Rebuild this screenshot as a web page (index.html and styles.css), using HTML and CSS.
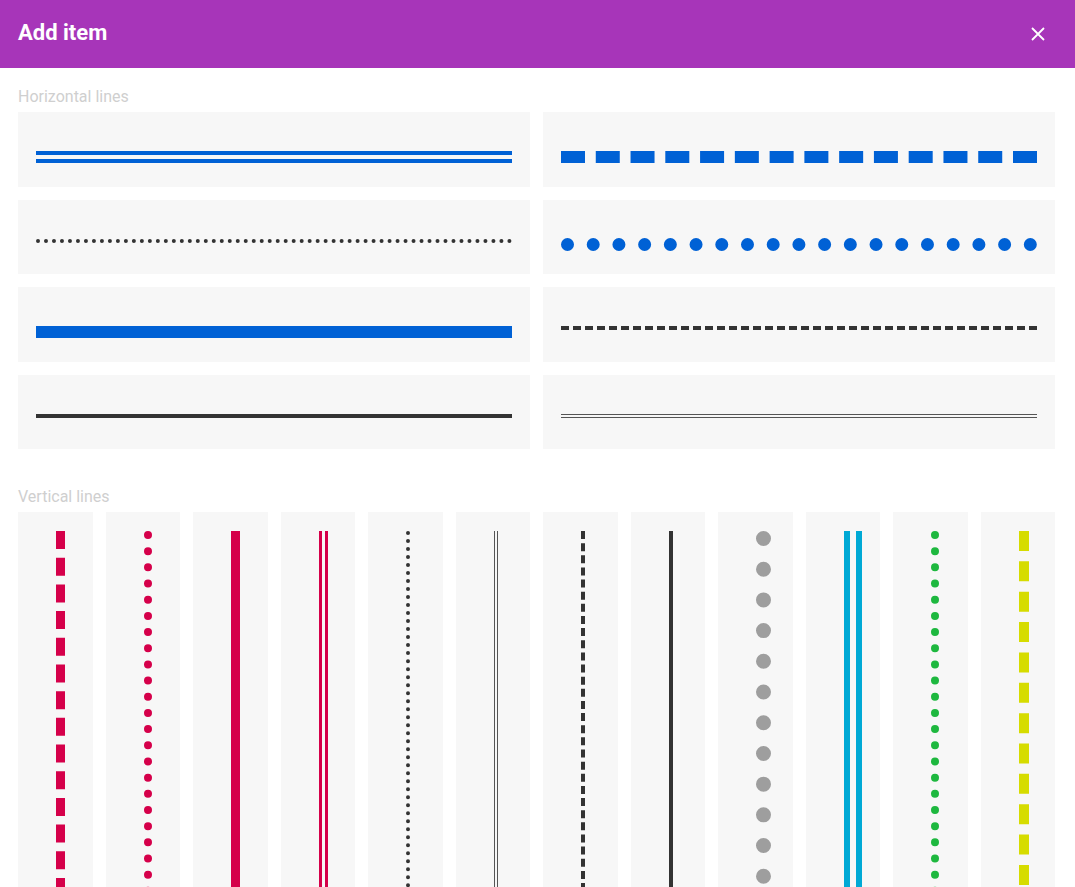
FILE: index.html
```html
<!DOCTYPE html>
<html>
<head>
<meta charset="utf-8">
<title>Add item</title>
<link rel="stylesheet" href="styles.css">
</head>
<body>
    <div class="dialog-header">
        <span class="dialog-title">Add item</span>
        <button class="close-btn" aria-label="Close">
            <svg width="14" height="14" viewBox="0 0 14 14">
                <path d="M1 1 L13 13 M13 1 L1 13" stroke="#fff" stroke-width="1.8" fill="none"/>
            </svg>
        </button>
    </div>

    <div class="content">
        <div class="section-label">Horizontal lines</div>
        <div class="h-grid">
            <div class="h-card"><div class="h-line h-blue-double"></div></div>
            <div class="h-card"><div class="h-line h-blue-dashed"></div></div>
            <div class="h-card"><div class="h-line h-dark-dotted"></div></div>
            <div class="h-card"><div class="h-line h-blue-dotted"></div></div>
            <div class="h-card"><div class="h-line h-blue-solid"></div></div>
            <div class="h-card"><div class="h-line h-dark-dashed"></div></div>
            <div class="h-card"><div class="h-line h-dark-solid"></div></div>
            <div class="h-card"><div class="h-line h-gray-double"></div></div>
        </div>

        <div class="section-label vertical-label">Vertical lines</div>
        <div class="v-grid">
            <div class="v-card"><div class="v-line v-red-dashed"></div></div>
            <div class="v-card"><div class="v-line v-red-dotted"></div></div>
            <div class="v-card"><div class="v-line v-red-solid"></div></div>
            <div class="v-card"><div class="v-line v-red-double"></div></div>
            <div class="v-card"><div class="v-line v-dark-dotted"></div></div>
            <div class="v-card"><div class="v-line v-gray-double"></div></div>
            <div class="v-card"><div class="v-line v-dark-dashed"></div></div>
            <div class="v-card"><div class="v-line v-dark-solid"></div></div>
            <div class="v-card"><div class="v-line v-gray-dotted"></div></div>
            <div class="v-card"><div class="v-line v-cyan-double"></div></div>
            <div class="v-card"><div class="v-line v-green-dotted"></div></div>
            <div class="v-card"><div class="v-line v-yellow-dashed"></div></div>
        </div>
    </div>
</body>
</html>
```
FILE: styles.css
```css
body {
    margin: 0;
    font-family: Roboto, "Liberation Sans", sans-serif;
    background: #ffffff;
    overflow: hidden;
}

.dialog-header {
    height: 68px;
    background: #a735b9;
    display: flex;
    align-items: center;
    justify-content: space-between;
    padding: 0 30px 0 18px;
    box-sizing: border-box;
}

.dialog-title {
    color: #ffffff;
    font-size: 22px;
    font-weight: 700;
    line-height: 30px;
    padding-bottom: 3px;
}

.close-btn {
    background: none;
    border: none;
    padding: 0;
    width: 14px;
    height: 14px;
    display: flex;
    cursor: pointer;
}

.content {
    padding: 19px 20px 0 18px;
}

.section-label {
    color: #cfcfcf;
    font-size: 16px;
    line-height: 20px;
    margin-bottom: 5px;
}

.vertical-label {
    margin-top: 38px;
}

/* horizontal */

.h-grid {
    display: grid;
    grid-template-columns: 1fr 1fr;
    gap: 13px;
}

.h-card {
    background: #f7f7f7;
    height: 74.5px;
    padding: 39px 18px 0 18px;
    box-sizing: border-box;
}

.h-line {
    width: 100%;
    height: 0;
}

.h-blue-double { border-top: 12px double #0061d5; }
.h-blue-dashed { border-top: 12px dashed #0061d5; }
.h-dark-dotted { border-top: 4px dotted #333333; }
.h-blue-dotted { border-top: 13px dotted #0061d5; margin-top: -1px; }
.h-blue-solid { border-top: 12px solid #0061d5; }
.h-dark-dashed { border-top: 4px dashed #333333; }
.h-dark-solid { border-top: 4px solid #333333; }
.h-gray-double { border-top: 4px double #555555; }

/* vertical */

.v-grid {
    display: grid;
    grid-template-columns: repeat(12, 1fr);
    gap: 13px;
}

.v-card {
    background: #f7f7f7;
    height: 480px;
    padding: 19px 0 0 38px;
    box-sizing: border-box;
}

.v-line {
    width: 0;
    height: 445px;
}

.v-red-dashed { border-left: 9px dashed #d5004a; }
.v-red-dotted { border-left: 8px dotted #d5004a; }
.v-red-solid { border-left: 9px solid #d5004a; }
.v-red-double { border-left: 9px double #d5004a; }
.v-dark-dotted { border-left: 4px dotted #333333; }
.v-gray-double { border-left: 4px double #555555; }
.v-dark-dashed { border-left: 4px dashed #333333; }
.v-dark-solid { border-left: 4px solid #333333; }
.v-gray-dotted { border-left: 15px dotted #9e9e9e; }
.v-cyan-double { border-left: 18px double #00a9d5; }
.v-green-dotted { border-left: 8px dotted #1eb83f; }
.v-yellow-dashed { border-left: 10px dashed #d6dc00; }
```
